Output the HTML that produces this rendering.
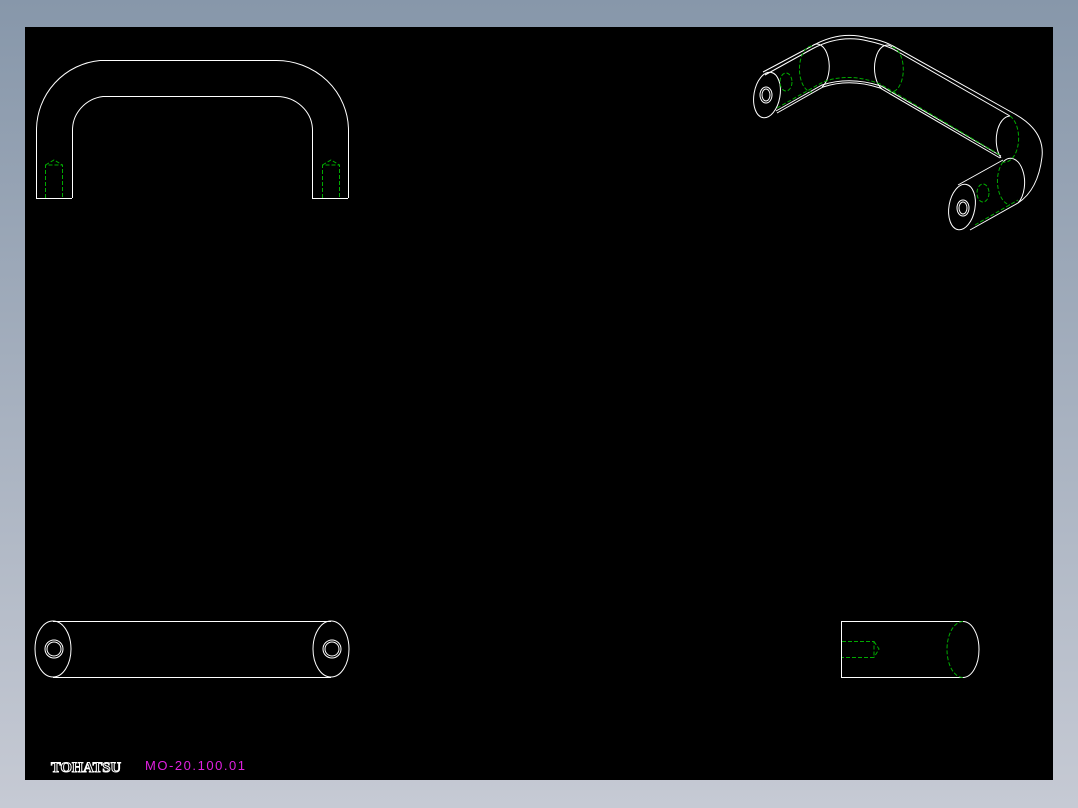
<!DOCTYPE html>
<html><head><style>
html,body{margin:0;padding:0;}
body{width:1078px;height:808px;background:linear-gradient(#8797aa,#c6cad4);position:relative;overflow:hidden;}
#bk{position:absolute;left:25px;top:27px;width:1028px;height:753px;background:#000;}
svg{position:absolute;left:0;top:0;}
</style></head><body>
<div id="bk"></div>
<svg width="1078" height="808" viewBox="0 0 1078 808" fill="none" stroke-width="1">
<g stroke="#fff">
<path d="M36.5 198 V130 A70 70 0 0 1 100 60.5 H276 A72 70 0 0 1 348.5 130 V198"/>
<path d="M72.5 198 V130 A35 34 0 0 1 103 96.5 H276 A36 34 0 0 1 312.5 130 V198"/>
<path d="M36 198.5 H72 M312 198.5 H348"/>
<ellipse cx="53" cy="649" rx="18" ry="28"/>
<circle cx="54" cy="649" r="9"/><circle cx="54" cy="649" r="7"/>
<ellipse cx="331" cy="649" rx="18" ry="28"/>
<circle cx="332" cy="649" r="9"/><circle cx="332" cy="649" r="7"/>
<path d="M53 621.5 H331 M53 677.5 H331"/>
<path d="M963 621.5 H841.5 V677.5 H963"/>
<path d="M963 621.5 A16 28 0 0 1 963 677.5"/>
<ellipse cx="767" cy="95" rx="13" ry="23" transform="rotate(10 767 95)"/>
<ellipse cx="766" cy="95" rx="6" ry="8"/><ellipse cx="766" cy="95" rx="4" ry="6"/>
<path d="M763 72 L812 46 Q840 30 868 38 Q882 40 893 46 L1013 113 Q1045 130 1042 157 Q1038 190 1018 203"/>
<path d="M765 75 L812 49 Q840 34 868 41 Q882 44 893 49 L1010 116"/>
<path d="M777 113 L823 87 Q850 78 880 88 L1000 158"/>
<path d="M776 111 L822 85 Q850 76 881 86 L1001 156"/>
<path d="M958 185 L1003 160 M970 230 L1018 203"/>
<ellipse cx="962" cy="207" rx="13" ry="23" transform="rotate(10 962 207)"/>
<ellipse cx="963" cy="208" rx="6" ry="8"/><ellipse cx="963" cy="208" rx="4" ry="6"/>
<path d="M812 46 A12 22 0 0 1 822 87"/>
<path d="M892 47 A12 22 0 0 0 882 89"/>
<path d="M1010 116 A14 24 0 0 0 1001 158"/>
<path d="M1003 162 A14 24 0 0 1 1018 203"/>
</g>
<g stroke="#0a0" stroke-dasharray="4 2">
<path d="M45.5 198 V165 H62.5 V198 M45.5 165 L54 160 L62.5 165"/>
<path d="M322.5 198 V165 H339.5 V198 M322.5 165 L331 160 L339.5 165"/>
<path d="M963 621.5 A16 28 0 0 0 963 677.5"/>
<path d="M842 641.5 H874 V657.5 H842 M874 641.5 L879 649 L874 657.5"/>
<path d="M812 46 A12 22 0 0 0 812 92 M892 47 A12 22 0 0 1 890 92 M1010 116 A14 24 0 0 1 1003 162 M1003 162 A14 24 0 0 0 1010 205"/>
<path d="M777 108 L823 82 Q850 72 880 84 L1000 155 M975 225 L1018 200"/>
<ellipse cx="786" cy="82" rx="6" ry="9"/><ellipse cx="983" cy="193" rx="6" ry="9"/>
</g>
<text x="51" y="772" font-family="Liberation Serif,serif" font-weight="bold" font-size="15" fill="#000" stroke="#fff" stroke-width="1" textLength="70" lengthAdjust="spacingAndGlyphs">TOHATSU</text>
<text x="145" y="770" font-family="Liberation Sans,sans-serif" font-size="13" fill="#e020e0" textLength="100" lengthAdjust="spacing">MO-20.100.01</text>
</svg>
</body></html>
